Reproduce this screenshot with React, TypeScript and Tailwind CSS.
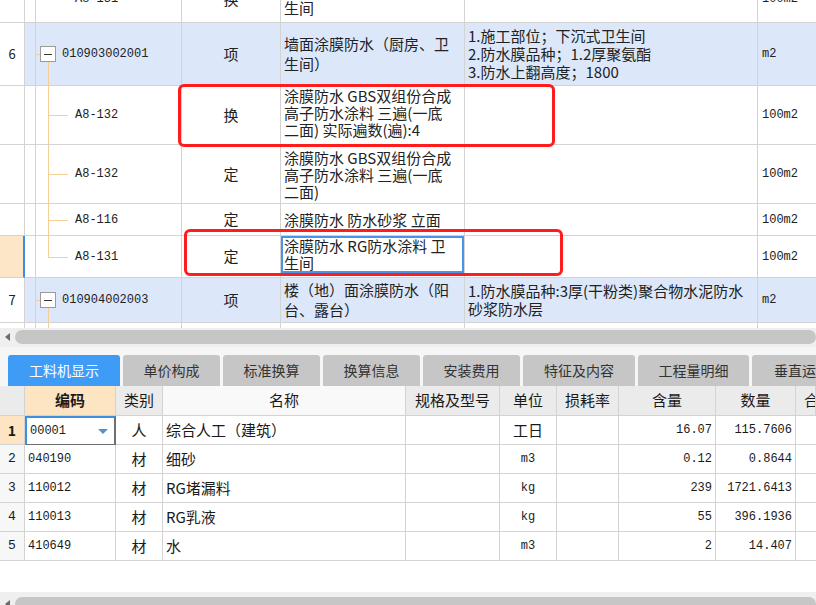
import React from "react"

const CJK = "font-['Noto_Sans_CJK_SC',sans-serif]"
const MONO = "font-['Liberation_Mono','Noto_Sans_CJK_SC',monospace] text-[12px]"
const LINE = "bg-[#f6cf97]"
const TOP_COLS = "grid grid-cols-[25px_157px_99px_184px_293px_58px]"
const BOT_COLS = "grid grid-cols-[25px_91px_47px_243px_94px_57px_62px_97px_80px_1fr]"
const CELL = "border-r border-b border-[#d3d3d3]"

type TopRow = {
  no?: string
  code: string
  item?: boolean
  last?: boolean
  type: string
  name: string[]
  feature?: string[]
  unit: string
  h: string
  selected?: boolean
  focus?: boolean
  lift?: boolean
}

const topRows: TopRow[] = [
  { code: "A8-131", last: true, type: "换", name: ["涂膜防水 RG防水涂料 卫", "生间"], unit: "100m2", h: "h-[47px]" },
  {
    no: "6",
    code: "010903002001",
    item: true,
    type: "项",
    name: ["墙面涂膜防水（厨房、卫", "生间）"],
    feature: ["1.施工部位；下沉式卫生间", "2.防水膜品种；1.2厚聚氨酯", "3.防水上翻高度；1800"],
    unit: "m2",
    h: "h-[63px]",
  },
  { code: "A8-132", type: "换", name: ["涂膜防水 GBS双组份合成", "高子防水涂料 三遍(一底", "二面)  实际遍数(遍):4"], unit: "100m2", h: "h-[59px]", lift: true },
  { code: "A8-132", type: "定", name: ["涂膜防水 GBS双组份合成", "高子防水涂料 三遍(一底", "二面)"], unit: "100m2", h: "h-[59px]" },
  { code: "A8-116", type: "定", name: ["涂膜防水 防水砂浆 立面"], unit: "100m2", h: "h-[32px]" },
  { code: "A8-131", last: true, type: "定", name: ["涂膜防水 RG防水涂料 卫", "生间"], unit: "100m2", h: "h-[42px]", selected: true, focus: true, lift: true },
  {
    no: "7",
    code: "010904002003",
    item: true,
    type: "项",
    name: ["楼（地）面涂膜防水（阳", "台、露台）"],
    feature: ["1.防水膜品种:3厚(干粉类)聚合物水泥防水", "砂浆防水层"],
    unit: "m2",
    h: "h-[45px]",
  },
  { code: "A8-116", type: "定", name: ["涂膜防水 防水砂浆 立面"], unit: "100m2", h: "h-[32px]" },
]

const tabs = [
  { label: "工料机显示", w: "w-[112px]" },
  { label: "单价构成", w: "w-[97px]" },
  { label: "标准换算", w: "w-[97px]" },
  { label: "换算信息", w: "w-[97px]" },
  { label: "安装费用", w: "w-[97px]" },
  { label: "特征及内容", w: "w-[112px]" },
  { label: "工程量明细", w: "w-[111px]" },
  { label: "垂直运输", w: "w-[100px]" },
]

const heads = ["", "编码", "类别", "名称", "规格及型号", "单位", "损耗率", "含量", "数量", "合价"]

const parts = [
  ["1", "00001", "人", "综合人工（建筑）", "", "工日", "", "16.07", "115.7606"],
  ["2", "040190", "材", "细砂", "", "m3", "", "0.12", "0.8644"],
  ["3", "110012", "材", "RG堵漏料", "", "kg", "", "239", "1721.6413"],
  ["4", "110013", "材", "RG乳液", "", "kg", "", "55", "396.1936"],
  ["5", "410649", "材", "水", "", "m3", "", "2", "14.407"],
]

const TreeCell = ({ row }: { row: TopRow }) => (
  <div className={`relative flex items-center ${CELL}`}>
    <div className={`absolute left-[10px] top-0 bottom-0 w-px ${LINE}`} />
    {row.item ? (
      <>
        <div className={`absolute left-[10px] top-1/2 w-[6px] h-px ${LINE}`} />
        <div className={`absolute left-[23px] top-1/2 bottom-0 w-px ${LINE}`} />
        <span className="relative ml-[15px] w-[16px] h-[16px] border border-[#9b9b9b] bg-white flex items-center justify-center">
          <span className="w-[8px] h-px bg-[#333]" />
        </span>
        <span className={`ml-[6px] text-[#222] ${MONO}`}>{row.code}</span>
      </>
    ) : (
      <>
        <div className={`absolute left-[23px] top-0 w-px ${LINE} ${row.last ? "h-1/2" : "bottom-0"}`} />
        <div className={`absolute left-[23px] top-1/2 w-[20px] h-px ${LINE}`} />
        <span className={`ml-[50px] text-[#222] ${MONO}`}>{row.code}</span>
      </>
    )}
  </div>
)

const TopGrid = () => (
  <div className="h-[328px] overflow-hidden">
    <div className="-mt-[24px]">
      {topRows.map((row, i) => (
        <div key={i} className={`${TOP_COLS} ${row.h} ${row.item ? "bg-[#dce8fa]" : "bg-white"}`}>
          <div
            className={`flex items-center justify-center text-[13px] text-[#222] ${CJK} ${CELL} ${
              row.selected ? "bg-[#fde6c8] border-r-2 border-r-[#3a8ee6]" : "bg-white"
            }`}
          >
            {row.no}
          </div>
          <TreeCell row={row} />
          <div className={`flex items-center justify-center text-[15px] text-[#222] ${CJK} ${CELL}`}>{row.type}</div>
          <div
            className={`relative flex flex-col justify-center pl-[3px] text-[15px] text-[#222] whitespace-nowrap ${CJK} ${CELL} ${
              row.item ? "leading-[20px]" : "leading-[17px]"
            } ${row.lift ? "pb-[5px]" : ""}`}
          >
            {row.focus && <div className="absolute left-0 right-0 top-0 bottom-[4px] border-2 border-[#4a93e6]" />}
            {row.name.map((l, j) => (
              <span key={j}>{l}</span>
            ))}
          </div>
          <div className={`flex flex-col justify-center pl-[3px] text-[15px] leading-[18px] text-[#222] whitespace-nowrap ${CJK} ${CELL}`}>
            {row.feature?.map((l, j) => (
              <span key={j}>{l}</span>
            ))}
          </div>
          <div className={`flex items-center pl-[4px] border-b border-[#d3d3d3] text-[#222] ${MONO}`}>{row.unit}</div>
        </div>
      ))}
    </div>
  </div>
)

const ScrollBar = ({ className }: { className: string }) => (
  <div className={`flex items-start bg-[#efefef] overflow-hidden ${className}`}>
    <div className="w-[15px] h-[14px] flex items-center justify-center">
      <div className="w-0 h-0 border-y-[4px] border-y-transparent border-r-[5px] border-r-[#6b6b6b]" />
    </div>
    <div className="flex-1 h-[14px] rounded-full bg-[#c6c6c6]" />
  </div>
)

const Tabs = () => (
  <div className="h-[39px] bg-[#f6f6f6] flex items-end gap-[3px] pl-[8px] overflow-hidden">
    {tabs.map((t, i) => (
      <div
        key={t.label}
        className={`${t.w} shrink-0 h-[31px] rounded-t-[3px] flex items-center justify-center text-[14px] whitespace-nowrap ${CJK} ${
          i === 0 ? "bg-[#3e9cf6] text-white" : "bg-[#c6c6c6] text-[#333]"
        }`}
      >
        {t.label}
      </div>
    ))}
  </div>
)

const PartsGrid = () => (
  <div className={`text-[#1a1a1a] ${CJK}`}>
    <div className={`${BOT_COLS} h-[30px] text-[15px]`}>
      {heads.map((h, i) => (
        <div
          key={i}
          className={`flex items-center overflow-hidden whitespace-nowrap ${CELL} ${
            i === 1 ? "bg-[#fde5c4] font-bold justify-center" : i === 3 ? "bg-[#f9f9f9] justify-center" : i === 9 ? "bg-[#ebebeb] pl-[8px]" : "bg-[#ebebeb] justify-center"
          }`}
        >
          {h}
        </div>
      ))}
    </div>
    {parts.map((r, i) => (
      <div key={i} className={`${BOT_COLS} h-[29px]`}>
        <div className={`flex items-center justify-center ${CELL} ${i === 0 ? "bg-[#fde5c4] font-bold text-[14px]" : `bg-[#f7f7f7] ${MONO} text-[13px]`}`}>
          {r[0]}
        </div>
        <div
          className={`relative flex items-center pl-[3px] ${MONO} ${
            i === 0 ? "border-l-2 border-t-2 border-[#3d8fe0] border-r-2 border-r-[#6f6f6f] border-b border-b-[#6f6f6f]" : CELL
          }`}
        >
          {r[1]}
          {i === 0 && (
            <div className="absolute right-[6px] top-[11px] w-0 h-0 border-x-[5px] border-x-transparent border-t-[5px] border-t-[#5b8fc6]" />
          )}
        </div>
        <div className={`flex items-center justify-center text-[15px] ${CELL}`}>{r[2]}</div>
        <div className={`flex items-center pl-[3px] text-[15px] whitespace-nowrap ${CELL}`}>{r[3]}</div>
        <div className={CELL} />
        <div className={`flex items-center justify-center ${i === 0 ? "text-[15px]" : MONO} ${CELL}`}>{r[5]}</div>
        <div className={CELL} />
        <div className={`flex items-center justify-end pr-[3px] ${MONO} ${CELL}`}>{r[7]}</div>
        <div className={`flex items-center justify-end pr-[3px] ${MONO} ${CELL}`}>{r[8]}</div>
        <div className="border-b border-[#d3d3d3]" />
      </div>
    ))}
  </div>
)

export default function App() {
  return (
    <div className="relative w-[816px] h-[605px] bg-white overflow-hidden flex flex-col">
      <TopGrid />
      <ScrollBar className="h-[19px] pt-[2px]" />
      <Tabs />
      <PartsGrid />
      <div className="h-[31px] bg-white" />
      <ScrollBar className="h-[13px] pt-[5px]" />

      {/* red annotation boxes */}
      <div className="absolute left-[178px] top-[84px] w-[377px] h-[63px] border-[3px] border-[#ff1c1c] rounded-[6px]" />
      <div className="absolute left-[184px] top-[229px] w-[379px] h-[47px] border-[3px] border-[#ff1c1c] rounded-[6px]" />
    </div>
  )
}
